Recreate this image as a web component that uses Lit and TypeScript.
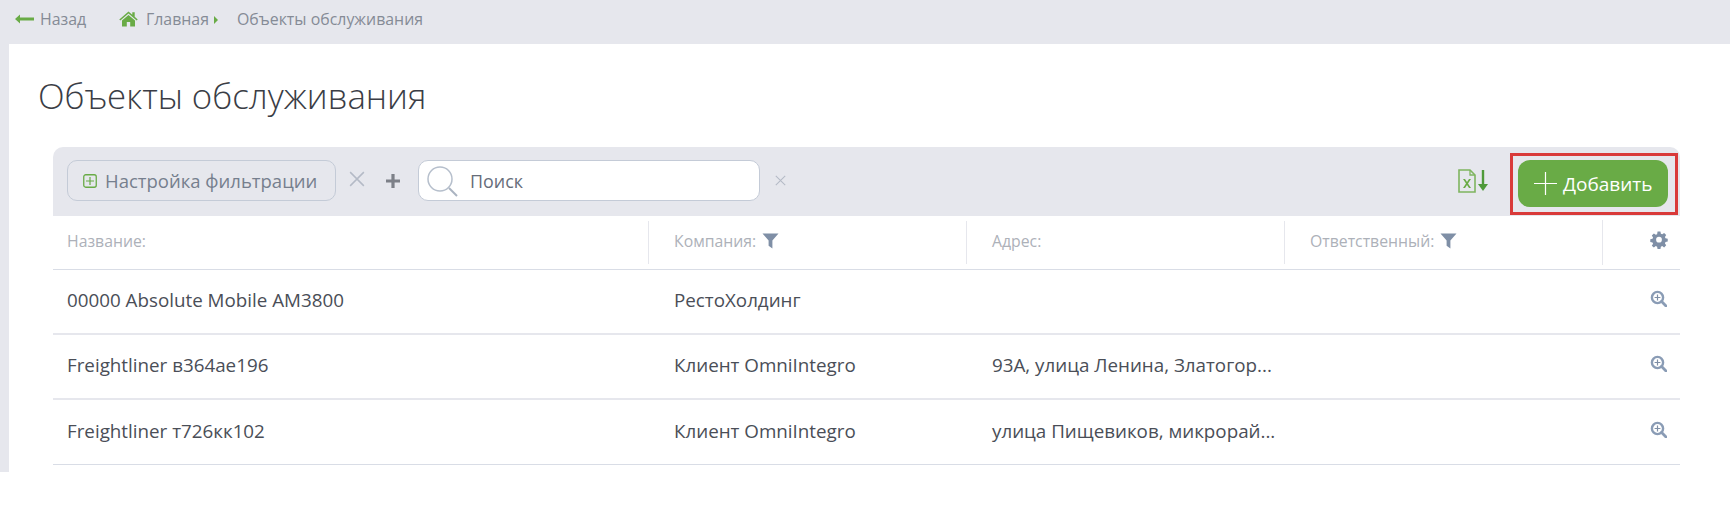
import { LitElement, html, css, svg } from 'lit'
import { customElement } from 'lit/decorators.js'

const rows = [
  { name: '00000 Absolute Mobile AM3800', company: 'РестоХолдинг', address: '' },
  { name: 'Freightliner в364ае196', company: 'Клиент OmniIntegro', address: '93А, улица Ленина, Златогор...' },
  { name: 'Freightliner т726кк102', company: 'Клиент OmniIntegro', address: 'улица Пищевиков, микрорай...' },
]

const funnel = html`<svg class="funnel" width="17" height="16" viewBox="0 0 17 16">
  <path d="M0.5 0.5h16L10.4 7.6V15.5L6.6 12.8V7.6z" fill="#7f8fa6" />
</svg>`

const cross = (size: number) => html`<svg width=${size} height=${size} viewBox="0 0 14 14">
  <path d="M1 1l12 12M13 1L1 13" stroke="#b4bac6" stroke-width="1.3" fill="none" />
</svg>`

const zoomIcon = svg`<circle cx="7.5" cy="7.5" r="5.6" fill="none" stroke="#8a9cb5" stroke-width="2.4" />
  <path d="M11.6 11.6l4.4 4.4" stroke="#8a9cb5" stroke-width="2.8" stroke-linecap="round" />
  <path d="M7.5 4.6v5.8M4.6 7.5h5.8" stroke="#7f8fa6" stroke-width="1.2" />`

@customElement('app-root')
export class AppRoot extends LitElement {
  static styles = css`
    :host {
      display: block;
      width: 1730px;
      height: 506px;
      background: #fff;
      font-family: 'Open Sans', 'Noto Sans', sans-serif;
      overflow: hidden;
    }

    .shell {
      height: 472px;
      box-sizing: border-box;
      background: #e6e7ed;
      padding: 44px 0 0 9px;
      position: relative;
    }

    .crumbs {
      position: absolute;
      top: 0;
      left: 0;
      height: 38px;
      display: flex;
      align-items: center;
      padding-left: 15px;
      font-size: 15.9px;
      color: #858b96;
    }
    .crumbs svg { display: block; }
    .back { display: flex; align-items: center; gap: 6px; width: 104px; }
    .home { display: flex; align-items: center; gap: 8px; }
    .tri { margin: 1px 19px 0 5px; }

    .panel {
      height: 100%;
      background: #fff;
      padding: 30px 50px 0 44px;
      box-sizing: border-box;
    }

    h1 {
      margin: 0 0 0 -15px;
      font-size: 34.8px;
      line-height: 44px;
      font-weight: 300;
      color: #3a3d45;
    }

    .toolbar {
      margin-top: 29px;
      height: 69px;
      box-sizing: border-box;
      background: #e6e7ed;
      border-radius: 10px 10px 0 0;
      display: flex;
      align-items: flex-start;
      padding: 13px 12px 0 14px;
    }

    .filter {
      width: 269px;
      height: 41px;
      box-sizing: border-box;
      border: 1.5px solid #c4cbd7;
      border-radius: 10px;
      display: flex;
      align-items: center;
      gap: 8px;
      padding-left: 15px;
      font-size: 18.5px;
      color: #767f8e;
      white-space: nowrap;
    }

    .clear { margin: 10px 0 0 13px; }
    .plus { margin: 14px 0 0 21px; }

    .search {
      margin-left: 18px;
      width: 342px;
      height: 41px;
      box-sizing: border-box;
      background: #fff;
      border: 1.5px solid #c4cbd7;
      border-radius: 10px;
      display: flex;
      align-items: center;
      gap: 12px;
      padding-left: 7px;
      font-size: 17.9px;
      color: #666d7a;
    }

    .clear-search { margin: 9px 0 0 15px; }

    .spacer { flex: 1; }

    .excel { margin: 9px 29px 0 0; }

    .add-wrap { position: relative; }
    .add {
      width: 150px;
      height: 47px;
      border-radius: 12px;
      background: #69ab46;
      color: #fff;
      display: flex;
      align-items: center;
      gap: 6px;
      padding-left: 16px;
      box-sizing: border-box;
      font-size: 19px;
      white-space: nowrap;
    }
    .mark {
      position: absolute;
      inset: -7px -10px -8px -8px;
      border: 3px solid #d93a3a;
      pointer-events: none;
    }

    .row {
      display: grid;
      grid-template-columns: 595px 318px 318px 318px 1fr;
      align-items: center;
      border-bottom: 2px solid #e6e7ed;
      height: 65px;
      box-sizing: border-box;
      font-size: 18.8px;
      color: #4a4e57;
      white-space: nowrap;
    }
    .row > div { padding: 0 0 3px 14px; }
    .row > div + div { padding-left: 26px; }
    .row .end { display: flex; justify-content: flex-end; padding: 0 13px 6px 0; }

    .head {
      height: 54px;
      border-bottom: 1px solid #d9dde6;
      font-size: 15.8px;
      color: #adb1b9;
    }
    .head > div { height: 40px; display: flex; align-items: center; gap: 6px; }
    .head > div + div { border-left: 1px solid #e6e7ed; padding-left: 25px; }
    .head .end { padding: 0 12px 5px 0; }
    .last { border-bottom: 1px solid #d9dde6; }
  `

  render() {
    return html`
      <div class="shell">
        <nav class="crumbs">
          <span class="back">
            <svg width="19" height="10" viewBox="0 0 19 10"><path d="M0 5l5-4.5V3.6h14v2.8H5v3.1z" fill="#69ab46" /></svg>
            Назад
          </span>
          <span class="home">
            <svg width="19" height="16" viewBox="0 0 19 16">
              <path d="M9.5 0.5L0.3 8.4l1 1.2 8.2-7 8.2 7 1-1.2-3-2.6V1.2h-2.4v2.5z" fill="#69ab46" />
              <path d="M9.5 4L3 9.5V15.5h4.8v-4.4h3.4v4.4H16V9.5z" fill="#69ab46" />
            </svg>
            Главная
          </span>
          <svg class="tri" width="4" height="8" viewBox="0 0 4 8"><path d="M0 0l4 4-4 4z" fill="#69ab46" /></svg>
          <span>Объекты обслуживания</span>
        </nav>
        <main class="panel">
          <h1>Объекты обслуживания</h1>
          <div class="toolbar">
            <div class="filter">
              <svg width="14" height="14" viewBox="0 0 14 14">
                <rect x="0.75" y="0.75" width="12.5" height="12.5" rx="2" fill="none" stroke="#69ab46" stroke-width="1.3" />
                <path d="M7 3v8M3 7h8" stroke="#69ab46" stroke-width="1.2" />
              </svg>
              Настройка фильтрации
            </div>
            <span class="clear">${cross(16)}</span>
            <svg class="plus" width="14" height="14" viewBox="0 0 14 14">
              <path d="M5.4 0h3.2v5.4H14v3.2H8.6V14H5.4V8.6H0V5.4h5.4z" fill="#7d8088" />
            </svg>
            <div class="search">
              <svg width="32" height="36" viewBox="0 0 32 36">
                <circle cx="14" cy="16" r="12" fill="none" stroke="#b6bfcc" stroke-width="1.5" />
                <path d="M23 25l8 8" stroke="#aab3c1" stroke-width="2" />
              </svg>
              Поиск
            </div>
            <span class="clear-search">${cross(11)}</span>
            <span class="spacer"></span>
            <svg class="excel" width="31" height="24" viewBox="0 0 31 24">
              <path d="M1 1h11l5 5v17H1z" fill="none" stroke="#7fb55f" stroke-width="1.6" />
              <path d="M12 1v5h5" fill="none" stroke="#7fb55f" stroke-width="1.3" />
              <path d="M5 10h2l2 3 2-3h2l-3 4.4 3 4.6h-2l-2-3-2 3H5l3-4.6z" fill="#69ab46" />
              <path d="M25 1v16" stroke="#4f9a3a" stroke-width="2.4" />
              <path d="M20 15h10l-5 7z" fill="#4f9a3a" />
            </svg>
            <div class="add-wrap">
              <div class="add">
                <svg width="23" height="23" viewBox="0 0 23 23"><path d="M11.5 0v23M0 11.5h23" stroke="#fff" stroke-width="1.2" /></svg>
                Добавить
              </div>
              <span class="mark"></span>
            </div>
          </div>
          <div class="row head">
            <div>Название:</div>
            <div>Компания: ${funnel}</div>
            <div>Адрес:</div>
            <div>Ответственный: ${funnel}</div>
            <div class="end">
              <svg width="18" height="18" viewBox="-1 0 20 19">
                <path fill="#7f8fa6" fill-rule="evenodd" d="M7.4 0h3.2l.5 2.5 1.5.6 2.1-1.4 2.3 2.3-1.4 2.1.6 1.5 2.5.5v3.2l-2.5.5-.6 1.5 1.4 2.1-2.3 2.3-2.1-1.4-1.5.6-.5 2.5H7.4l-.5-2.5-1.5-.6-2.1 1.4L1 15.9l1.4-2.1-.6-1.5L-.7 11.8V8.6l2.5-.5.6-1.5L1 4.5l2.3-2.3 2.1 1.4 1.5-.6zM9 6a3.2 3.2 0 1 0 0 6.4A3.2 3.2 0 0 0 9 6z" />
              </svg>
            </div>
          </div>
          ${rows.map(
            (r, i) => html`
              <div class="row ${i === rows.length - 1 ? 'last' : ''}">
                <div>${r.name}</div>
                <div>${r.company}</div>
                <div>${r.address}</div>
                <div></div>
                <div class="end">
                  <svg width="17" height="17" viewBox="0 0 17 17">${zoomIcon}</svg>
                </div>
              </div>
            `,
          )}
        </main>
      </div>
    `
  }
}
